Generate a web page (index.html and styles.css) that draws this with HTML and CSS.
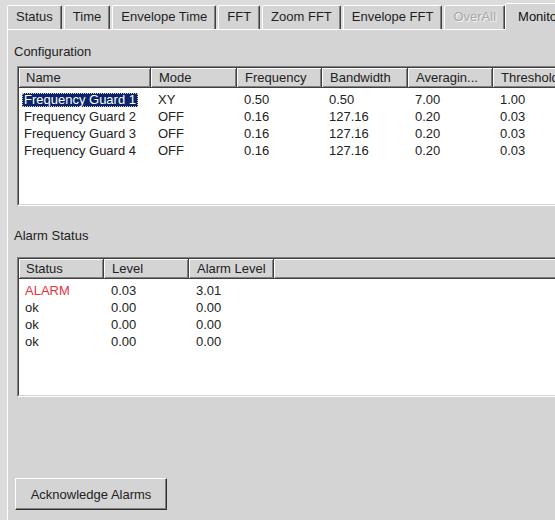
FILE: index.html
```html
<!DOCTYPE html>
<html lang="en">
<head>
<meta charset="utf-8">
<title>Monitor</title>
<link rel="stylesheet" href="styles.css">
</head>
<body>
<div class="window">
  <div class="tabstrip">
    <div class="tab">Status</div>
    <div class="tab">Time</div>
    <div class="tab">Envelope Time</div>
    <div class="tab">FFT</div>
    <div class="tab">Zoom FFT</div>
    <div class="tab">Envelope FFT</div>
    <div class="tab disabled">OverAll</div>
    <div class="tab active">Monitor</div>
  </div>

  <div class="panel">
    <div class="group-label">Configuration</div>
    <div class="listview config">
      <div class="lv-frame">
        <div class="lv-head">
          <div class="hcell first">Name</div>
          <div class="hcell">Mode</div>
          <div class="hcell">Frequency</div>
          <div class="hcell">Bandwidth</div>
          <div class="hcell">Averagin...</div>
          <div class="hcell">Threshold</div>
        </div>
        <div class="lv-body">
          <div class="row">
            <div class="cell first"><span class="selected">Frequency Guard 1</span></div>
            <div class="cell">XY</div>
            <div class="cell">0.50</div>
            <div class="cell">0.50</div>
            <div class="cell">7.00</div>
            <div class="cell">1.00</div>
          </div>
          <div class="row">
            <div class="cell first"><span class="plain">Frequency Guard 2</span></div>
            <div class="cell">OFF</div>
            <div class="cell">0.16</div>
            <div class="cell">127.16</div>
            <div class="cell">0.20</div>
            <div class="cell">0.03</div>
          </div>
          <div class="row">
            <div class="cell first"><span class="plain">Frequency Guard 3</span></div>
            <div class="cell">OFF</div>
            <div class="cell">0.16</div>
            <div class="cell">127.16</div>
            <div class="cell">0.20</div>
            <div class="cell">0.03</div>
          </div>
          <div class="row">
            <div class="cell first"><span class="plain">Frequency Guard 4</span></div>
            <div class="cell">OFF</div>
            <div class="cell">0.16</div>
            <div class="cell">127.16</div>
            <div class="cell">0.20</div>
            <div class="cell">0.03</div>
          </div>
        </div>
      </div>
    </div>

    <div class="group-label alarm-label">Alarm Status</div>
    <div class="listview alarms">
      <div class="lv-frame">
        <div class="lv-head">
          <div class="hcell first">Status</div>
          <div class="hcell">Level</div>
          <div class="hcell">Alarm Level</div>
          <div class="hcell filler"></div>
        </div>
        <div class="lv-body">
          <div class="row">
            <div class="cell first alarm">ALARM</div>
            <div class="cell">0.03</div>
            <div class="cell">3.01</div>
          </div>
          <div class="row">
            <div class="cell first">ok</div>
            <div class="cell">0.00</div>
            <div class="cell">0.00</div>
          </div>
          <div class="row">
            <div class="cell first">ok</div>
            <div class="cell">0.00</div>
            <div class="cell">0.00</div>
          </div>
          <div class="row">
            <div class="cell first">ok</div>
            <div class="cell">0.00</div>
            <div class="cell">0.00</div>
          </div>
        </div>
      </div>
    </div>

    <button class="btn" type="button">Acknowledge Alarms</button>
  </div>
</div>
</body>
</html>
```

FILE: styles.css
```css
* {
  box-sizing: border-box;
}

html,
body {
  margin: 0;
}

body {
  width: 555px;
  height: 520px;
  overflow: hidden;
  background: #dcdcdc;
  font: 13px/16px "Liberation Sans", Arial, sans-serif;
  color: #1f1f1f;
}

/* dialog body, wider than the viewport so the right edge is cut off */
.window {
  margin-left: 7px;
  width: 640px;
}

/* ---- tab strip ---- */
.tabstrip {
  display: flex;
  align-items: flex-end;
  height: 29px;
}

.tab {
  height: 24px;
  margin-right: 2px;
  padding: 0 8px;
  border: 1px solid;
  border-bottom: none;
  border-color: #fff #404040 transparent #fff;
  border-radius: 2px 2px 0 0;
  box-shadow: inset -1px 0 #808080;
  background: #d4d4d4;
  line-height: 22px;
  white-space: nowrap;
}

.tab.disabled {
  color: #a8a8a8;
  text-shadow: 1px 1px #f4f4f4;
}

.tab.active {
  position: relative;
  z-index: 1;
  height: 27px;
  margin-left: -2px;
  margin-bottom: -1px;
  padding: 0 12px;
  line-height: 25px;
  color: #111;
}

/* ---- page body under the tabs ---- */
.panel {
  height: 491px;
  padding: 14px 0 0 6px;
  border-top: 1px solid #fff;
  border-left: 1px solid #fff;
  background: #d4d4d4;
}

.group-label {
  line-height: 16px;
  color: #222;
}

.alarm-label {
  margin-top: 22px;
}

/* ---- list views ---- */
.listview {
  margin: 6px 0 0 3px;
  border: 1px solid;
  border-color: #808080 #fff #fff #808080;
}

.alarms {
  margin-top: 13px;
}

.lv-frame {
  height: 138px;
  border: 1px solid;
  border-color: #404040 #d4d4d4 #d4d4d4 #404040;
  background: #fff;
}

.lv-head,
.row {
  display: grid;
}

.config .lv-head,
.config .row {
  grid-template-columns: 132px 86px 85px 86px 85px 1fr;
}

.alarms .lv-head,
.alarms .row {
  grid-template-columns: 85px 85px 85px 1fr;
}

.hcell {
  height: 20px;
  padding-left: 8px;
  border-right: 1px solid #404040;
  border-bottom: 1px solid #404040;
  box-shadow: inset 1px 1px #fff, inset -1px -1px #808080;
  background: #d4d4d4;
  line-height: 19px;
  white-space: nowrap;
  overflow: hidden;
  color: #222;
}

.hcell.first {
  padding-left: 7px;
}

.lv-body {
  padding-top: 3px;
}

.row {
  height: 17px;
  line-height: 17px;
}

.cell {
  padding-left: 7px;
  white-space: nowrap;
  color: #222;
}

.config .cell.first {
  padding-left: 3px;
}

.alarms .cell.first {
  padding-left: 6px;
}

.plain,
.selected {
  display: inline-block;
  padding: 0 2px;
  line-height: 14px;
}

.selected {
  background: #0a246a;
  color: #fff;
  outline: 1px dotted #d8d0a0;
  outline-offset: -1px;
}

.cell.alarm {
  color: #e8323c;
}

/* ---- push button ---- */
.btn {
  display: block;
  width: 152px;
  height: 32px;
  margin: 81px 0 0 1px;
  padding: 0;
  border: 1px solid;
  border-color: #fff #303030 #303030 #fff;
  box-shadow: inset -1px -1px #808080;
  background: #d4d4d4;
  font: 13px "Liberation Sans", Arial, sans-serif;
  color: #222;
}
```
